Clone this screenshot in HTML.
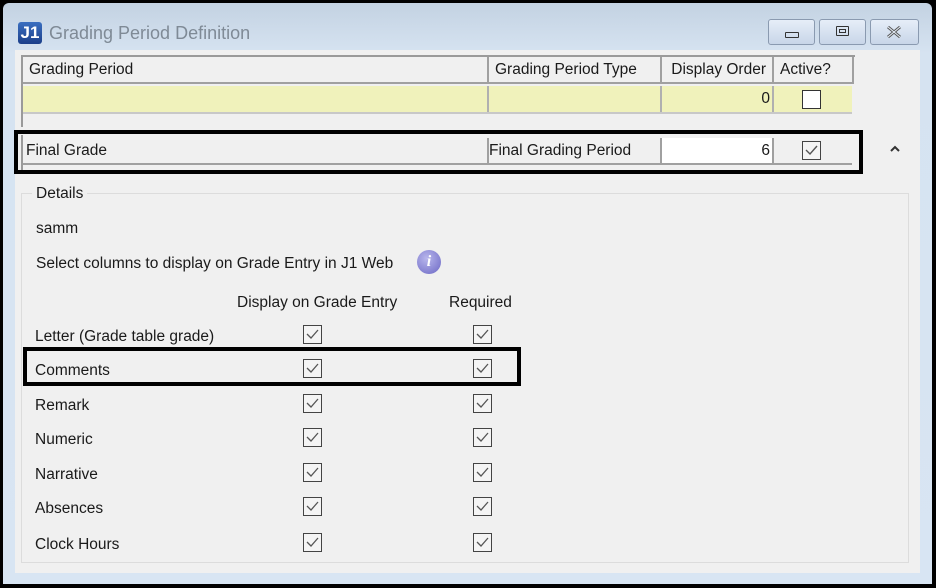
<!DOCTYPE html>
<html><head><style>
body{margin:0;width:936px;height:588px;background:#000;position:relative;overflow:hidden;font-family:"Liberation Sans",sans-serif;font-size:15.5px;color:#1a1a1a}
.a{position:absolute}
.frame{left:3px;top:3px;width:929px;height:581px;background:linear-gradient(#c3d2e2,#d6e3f1 50px,#d8e5f3);border-radius:6px 6px 0 0}
.client{left:15px;top:50px;width:905px;height:523px;background:#f0f0f0}
.btn{top:19px;height:24px;border:1px solid #8a9ab0;border-radius:3px;background:linear-gradient(#e6eef8,#c8d6e8)}
.cell{position:absolute;box-sizing:border-box;border-right:2px solid #a0a0a0;height:100%;padding:0 6px;line-height:26px}
.cb{position:absolute;width:19px;height:19px;box-sizing:border-box;border:1px solid #333;background:#fff}
.cb svg{position:absolute;left:1px;top:1px}
.t{position:absolute;white-space:nowrap}
</style></head><body>
<div class="a frame"></div>
<div class="a" style="left:18px;top:22px;width:24px;height:22px;background:linear-gradient(#3b6fc0,#1c3f8a);border-radius:3px;color:#fff;font-weight:bold;font-size:17px;line-height:22px;text-align:center">J1</div>
<div class="t" style="left:49px;top:23px;font-size:18px;color:#7f8a96">Grading Period Definition</div>
<div class="a btn" style="left:768px;width:45px"><div class="a" style="left:16px;top:12px;width:12px;height:4px;border:1px solid #333;border-radius:1px"></div></div>
<div class="a btn" style="left:819px;width:45px"><div class="a" style="left:16px;top:6px;width:11px;height:8px;border:1px solid #333;border-radius:1px"></div><div class="a" style="left:19px;top:9px;width:5px;height:2px;border:1px solid #333"></div></div>
<div class="a btn" style="left:870px;width:47px"><svg class="a" style="left:15px;top:5px" width="16" height="14"><path d="M2 2 L14 12 M14 2 L2 12" stroke="#555" stroke-width="3" fill="none"/><path d="M2 2 L14 12 M14 2 L2 12" stroke="#e6eef8" stroke-width="1" fill="none"/></svg></div>
<div class="a client"></div>
<!-- top grid -->
<div class="a" style="left:21px;top:55px;width:832px;height:70px;border-left:2px solid #9a9a9a;border-top:2px solid #9a9a9a"></div>
<div class="a" style="left:23px;top:57px;width:829px;height:25px;background:#f0f0f0;border-bottom:2px solid #a0a0a0;border-right:2px solid #a0a0a0">
<div class="cell" style="left:0;width:466px">Grading Period</div>
<div class="cell" style="left:466px;width:173px">Grading Period Type</div>
<div class="cell" style="left:639px;width:112px;text-align:right">Display Order</div>
<div class="cell" style="left:751px;width:80px;border:0">Active?</div>
</div>
<div class="a" style="left:23px;top:86px;width:829px;height:26px;background:#f0f2bb;border-bottom:2px solid #c8c8c8">
<div class="cell" style="left:0;width:466px;border-color:#b0b0b0"></div>
<div class="cell" style="left:466px;width:173px;border-color:#b0b0b0"></div>
<div class="cell" style="left:639px;width:112px;text-align:right;border-color:#b0b0b0;padding-right:2px">0</div>
</div>
<div class="cb" style="left:802px;top:90px"></div>
<!-- second grid -->
<div class="a" style="left:21px;top:135px;width:887px;height:36px;border-left:2px solid #9a9a9a"></div>
<div class="a" style="left:23px;top:138px;width:829px;height:25px;background:#f0f0f0;border-bottom:2px solid #a0a0a0">
<div class="cell" style="left:0;width:466px;padding-left:3px">Final Grade</div>
<div class="cell" style="left:466px;width:173px;padding-left:0">Final Grading Period</div>
<div class="cell" style="left:639px;width:112px;text-align:right;background:#fff;padding-right:2px">6</div>
</div>
<div class="cb" style="left:802px;top:141px;background:#f4f4f4;border-color:#444"><svg width="15" height="15"><path d="M2 7 L6 11 L13 3" stroke="#555" stroke-width="1.4" fill="none"/></svg></div>
<svg class="a" style="left:889px;top:144px" width="12" height="9"><path d="M2 7 L6 3 L10 7" stroke="#333" stroke-width="2" fill="none"/></svg>
<div class="a" style="left:14px;top:130px;width:841px;height:36px;border:4px solid #000"></div>
<!-- details group -->
<div class="a" style="left:21px;top:193px;width:886px;height:368px;border:1px solid #dcdcdc"></div>
<div class="t" style="left:32px;top:185px;background:#f0f0f0;padding:0 4px">Details</div>
<div class="t" style="left:36px;top:220px">samm</div>
<div class="t" style="left:36px;top:255px">Select columns to display on Grade Entry in J1 Web</div>
<div class="a" style="left:417px;top:250px;width:24px;height:24px;border-radius:50%;background:radial-gradient(circle at 40% 35%,#b8b6ec,#6b67c4);color:#fff;font:italic bold 16px 'Liberation Serif',serif;text-align:center;line-height:24px">i</div>
<div class="t" style="left:237px;top:294px">Display on Grade Entry</div>
<div class="t" style="left:449px;top:294px">Required</div>
<div class="t" style="left:35px;top:328px">Letter (Grade table grade)</div>
<div class="t" style="left:35px;top:362px">Comments</div>
<div class="t" style="left:35px;top:397px">Remark</div>
<div class="t" style="left:35px;top:431px">Numeric</div>
<div class="t" style="left:35px;top:466px">Narrative</div>
<div class="t" style="left:35px;top:500px">Absences</div>
<div class="t" style="left:35px;top:536px">Clock Hours</div>
<div id="cbs"></div>
<div class="a" style="left:23px;top:347px;width:490px;height:31px;border:4px solid #000"></div>
<script>
var ys=[325,359,394,428,463,497,533],h='';
ys.forEach(function(y){[303,473].forEach(function(x){h+='<div class="cb" style="left:'+x+'px;top:'+y+'px;background:#f4f4f4;border-color:#444"><svg width="15" height="15"><path d="M2 7 L6 11 L13 3" stroke="#555" stroke-width="1.3" fill="none"/></svg></div>';});});
document.getElementById('cbs').innerHTML=h;
</script>
</body></html>
